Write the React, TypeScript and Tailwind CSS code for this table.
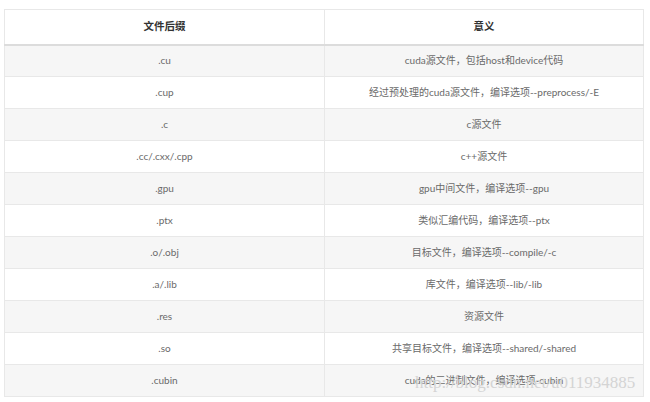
const rows: [string, string][] = [
  ['.cu', 'cuda源文件，包括host和device代码'],
  ['.cup', '经过预处理的cuda源文件，编译选项--preprocess/-E'],
  ['.c', 'c源文件'],
  ['.cc/.cxx/.cpp', 'c++源文件'],
  ['.gpu', 'gpu中间文件，编译选项--gpu'],
  ['.ptx', '类似汇编代码，编译选项--ptx'],
  ['.o/.obj', '目标文件，编译选项--compile/-c'],
  ['.a/.lib', '库文件，编译选项--lib/-lib'],
  ['.res', '资源文件'],
  ['.so', '共享目标文件，编译选项--shared/-shared'],
  ['.cubin', 'cuda的二进制文件，编译选项-cubin'],
];

export default function App() {
  return (
    <div
      className="relative w-[650px] h-[402px] bg-white overflow-hidden pt-[9px] pl-[4px]"
      style={{ fontFamily: 'Lato, "Noto Sans CJK SC", sans-serif' }}
    >
      <table className="w-[640px] border-collapse text-[10px] text-[#6a6a6a]">
        <thead>
          <tr className="h-[35px]">
            <th className="w-[320px] border border-[#e8e8e8] border-b-2 border-b-[#dcdcdc] text-[10.5px] font-bold text-[#333]">
              文件后缀
            </th>
            <th className="border border-[#e8e8e8] border-b-2 border-b-[#dcdcdc] text-[10.5px] font-bold text-[#333]">
              意义
            </th>
          </tr>
        </thead>
        <tbody>
          {rows.map(([ext, desc], i) => (
            <tr key={ext} className={`h-[32px] ${i % 2 === 0 ? 'bg-[#f6f6f6]' : 'bg-white'}`}>
              <td className="border border-[#e8e8e8] text-center">{ext}</td>
              <td className="border border-[#e8e8e8] text-center">{desc}</td>
            </tr>
          ))}
        </tbody>
      </table>

      {/* watermark */}
      <div
        className="absolute left-[415px] top-[374px] text-[17px] text-[#d4d4d4] leading-none"
        style={{ fontFamily: '"Liberation Serif", serif' }}
      >
        http://blog.csdn.net/u011934885
      </div>
    </div>
  );
}
